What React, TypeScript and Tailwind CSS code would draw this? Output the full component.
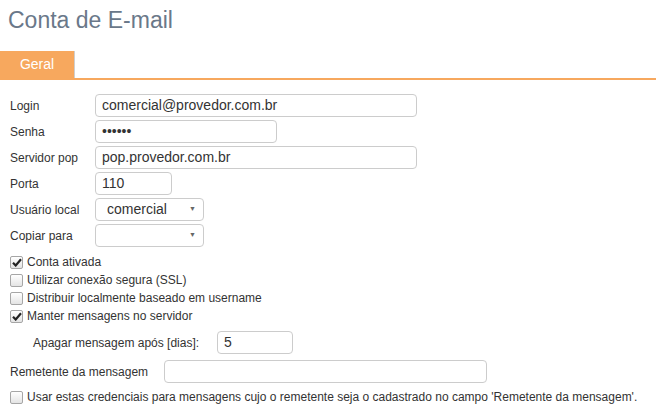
const Box = (props: { checked?: boolean }) => (
  <span className="w-[13px] h-[13px] shrink-0 rounded-[2px] border border-[#a6a6a6] bg-gradient-to-b from-white to-[#e4e4e4] flex items-center justify-center">
    {props.checked && (
      <svg width="10" height="9" viewBox="0 0 10 9">
        <path d="M1 4.8 L3.7 7.5 L9 1.3" fill="none" stroke="#222" strokeWidth="2.2" />
      </svg>
    )}
  </span>
);

function Check(props: { label: string; checked?: boolean }) {
  return (
    <div className="h-[18px] flex items-center gap-[4px] pl-[10px] text-[12px] text-[#333]">
      <Box checked={props.checked} />
      <span>{props.label}</span>
    </div>
  );
}

function Field(props: { w: string; value?: string }) {
  return (
    <div
      className={`${props.w} h-[23px] border border-[#cccccc] rounded-[4px] bg-white flex items-center px-[6px] text-[14px] text-[#333]`}
    >
      {props.value}
    </div>
  );
}

function Select(props: { value?: string }) {
  return (
    <div className="w-[109px] h-[23px] border border-[#cccccc] rounded-[4px] bg-white flex items-center justify-between pl-[11px] pr-[7px] text-[14px] text-[#333]">
      <span>{props.value}</span>
      <span className="text-[7px] text-[#666]">▼</span>
    </div>
  );
}

function Row(props: { label: string; children: React.ReactNode }) {
  return (
    <div className="flex items-center pl-[10px]">
      <span className="w-[85px] text-[12px] text-[#333]">{props.label}</span>
      {props.children}
    </div>
  );
}

export default function App() {
  return (
    <div className="w-[656px] h-[416px] bg-white font-['Liberation_Sans',Arial,sans-serif] overflow-hidden">
      <h1 className="pt-[6px] pl-[8px] text-[23px] leading-[29px] text-[#6a7889]">Conta de E-mail</h1>

      <div className="mt-[16px] border-b-2 border-[#f7a85e] flex">
        <div className="w-[75px] h-[27px] bg-[#f7a85e] border-r border-[#cfcfcf] flex items-center justify-center text-[14px] text-white">
          Geral
        </div>
      </div>

      <div className="pt-[14px] flex flex-col gap-[3px]">
        <Row label="Login">
          <Field w="w-[322px]" value="comercial@provedor.com.br" />
        </Row>
        <Row label="Senha">
          <Field w="w-[182px]" value="••••••" />
        </Row>
        <Row label="Servidor pop">
          <Field w="w-[322px]" value="pop.provedor.com.br" />
        </Row>
        <Row label="Porta">
          <Field w="w-[77px]" value="110" />
        </Row>
        <Row label="Usuário local">
          <Select value="comercial" />
        </Row>
        <Row label="Copiar para">
          <Select />
        </Row>
      </div>

      <div className="mt-[6px] flex flex-col">
        <Check label="Conta ativada" checked />
        <Check label="Utilizar conexão segura (SSL)" />
        <Check label="Distribuir localmente baseado em username" />
        <Check label="Manter mensagens no servidor" checked />
      </div>

      <div className="mt-[6px] flex items-center pl-[33px]">
        <span className="w-[184px] text-[12px] text-[#333]">Apagar mensagem após [dias]:</span>
        <Field w="w-[76px]" value="5" />
      </div>

      <div className="mt-[6px] flex items-center pl-[10px]">
        <span className="w-[154px] text-[12px] text-[#333]">Remetente da mensagem</span>
        <Field w="w-[323px]" />
      </div>

      <div className="mt-[5px]">
        <Check label="Usar estas credenciais para mensagens cujo o remetente seja o cadastrado no campo 'Remetente da mensagem'." />
      </div>
    </div>
  );
}
